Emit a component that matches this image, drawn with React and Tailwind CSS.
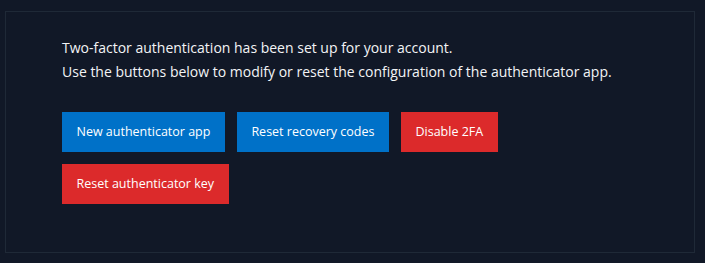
export default function App() {
  const font = { fontFamily: '"Open Sans", "Noto Sans", sans-serif' };
  const btn = "h-[40px] px-[14.5px] text-[12.5px] text-white";
  return (
    <div className="min-h-[263px] w-full bg-[#111827] pl-[5px] pt-[11px]" style={font}>
      <div className="h-[242px] w-[690px] border border-[#1f2937] pl-[56px] pt-[24px]">
        <div className="text-[14px] leading-[24px] text-[#f3f4f6]">
          <p>Two-factor authentication has been set up for your account.</p>
          <p>Use the buttons below to modify or reset the configuration of the authenticator app.</p>
        </div>
        <div className="mt-[28px] flex w-[450px] flex-wrap gap-[12px]">
          <button className={`${btn} bg-[#0071c8]`}>New authenticator app</button>
          <button className={`${btn} bg-[#0071c8]`}>Reset recovery codes</button>
          <button className={`${btn} bg-[#dc2a2b]`}>Disable 2FA</button>
          <button className={`${btn} bg-[#dc2a2b]`}>Reset authenticator key</button>
        </div>
      </div>
    </div>
  );
}
